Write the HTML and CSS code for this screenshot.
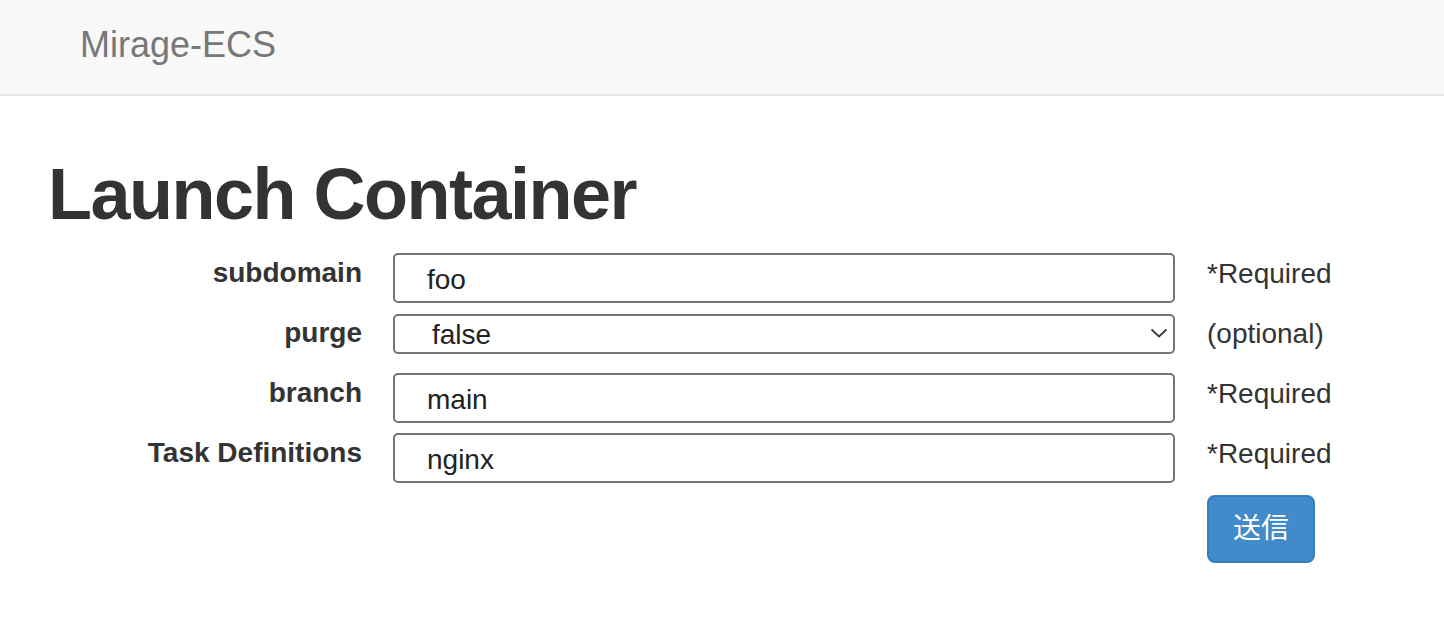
FILE: index.html
```html
<!DOCTYPE html>
<html lang="ja">
<head>
<meta charset="utf-8">
<title>Mirage-ECS</title>
<link rel="stylesheet" href="styles.css">
</head>
<body>
<header class="navbar">
  <a class="brand" href="#">Mirage-ECS</a>
</header>
<main class="page">
  <h1 class="title">Launch Container</h1>
  <form class="launch-form">
    <label class="field-label" for="subdomain">subdomain</label>
    <input class="field-input" id="subdomain" type="text" value="foo">
    <span class="field-note">*Required</span>

    <label class="field-label" for="purge">purge</label>
    <div class="select-wrap">
      <select class="field-select" id="purge">
        <option>false</option>
        <option>true</option>
      </select>
      <svg class="chevron" width="20" height="12" viewBox="0 0 20 12"><path d="M2.5 2.5 L10 9.5 L17.5 2.5" fill="none" stroke="#3a3a3a" stroke-width="1.8"/></svg>
    </div>
    <span class="field-note">(optional)</span>

    <label class="field-label" for="branch">branch</label>
    <input class="field-input" id="branch" type="text" value="main">
    <span class="field-note">*Required</span>

    <label class="field-label" for="taskdef">Task Definitions</label>
    <input class="field-input" id="taskdef" type="text" value="nginx">
    <span class="field-note">*Required</span>

    <span class="spacer"></span>
    <span class="spacer"></span>
    <div class="actions"><button class="btn-primary" type="submit">送信</button></div>
  </form>
</main>
</body>
</html>
```
FILE: styles.css
```css
* { box-sizing: border-box; }
html, body { margin: 0; padding: 0; }
body {
  font-family: "Liberation Sans", Arial, "Noto Sans CJK JP", sans-serif;
  color: #333;
  background: #fff;
}
.navbar {
  height: 96px;
  background: #f8f8f8;
  border-bottom: 2px solid #e7e7e7;
  padding: 25px 0 0 80px;
}
.brand {
  font-size: 36px;
  line-height: 40px;
  color: #777;
  text-decoration: none;
}
.page {
  padding: 0 0 40px 48px;
}
.title {
  margin: 59px 0 19px;
  font-size: 72px;
  line-height: 79px;
  font-weight: bold;
  letter-spacing: -1.5px;
}
.launch-form {
  display: grid;
  grid-template-columns: 314px 782px auto;
  grid-template-rows: repeat(4, 50px) auto;
  column-gap: 31px;
  row-gap: 10px;
  align-items: start;
}
.field-label {
  font-size: 28px;
  line-height: 40px;
  font-weight: bold;
  text-align: right;
}
.field-note {
  font-size: 28px;
  line-height: 40px;
  padding-left: 1px;
  padding-top: 1px;
}
.field-input, .field-select {
  font-family: "Liberation Sans", Arial, sans-serif;
  font-size: 28px;
  color: #222;
  width: 782px;
  border: 2px solid #767676;
  border-radius: 5px;
  background: #fff;
  margin: 0;
}
.field-input {
  height: 50px;
  padding: 3px 0 0 32px;
}
.select-wrap {
  position: relative;
  width: 782px;
  height: 40px;
  margin-top: 1px;
}
.field-select {
  height: 40px;
  padding: 0 0 0 37px;
  appearance: none;
  -webkit-appearance: none;
}
.chevron {
  position: absolute;
  right: 6px;
  top: 13px;
  pointer-events: none;
}
.actions { padding-top: 2px; }
.btn-primary {
  font-family: "Liberation Sans", "Noto Sans CJK JP", sans-serif;
  font-size: 28px;
  line-height: 40px;
  height: 68px;
  padding: 12px 24px;
  color: #fff;
  background: #428bca;
  border: 2px solid #357ebd;
  border-radius: 8px;
  margin-left: 1px;
}
```
